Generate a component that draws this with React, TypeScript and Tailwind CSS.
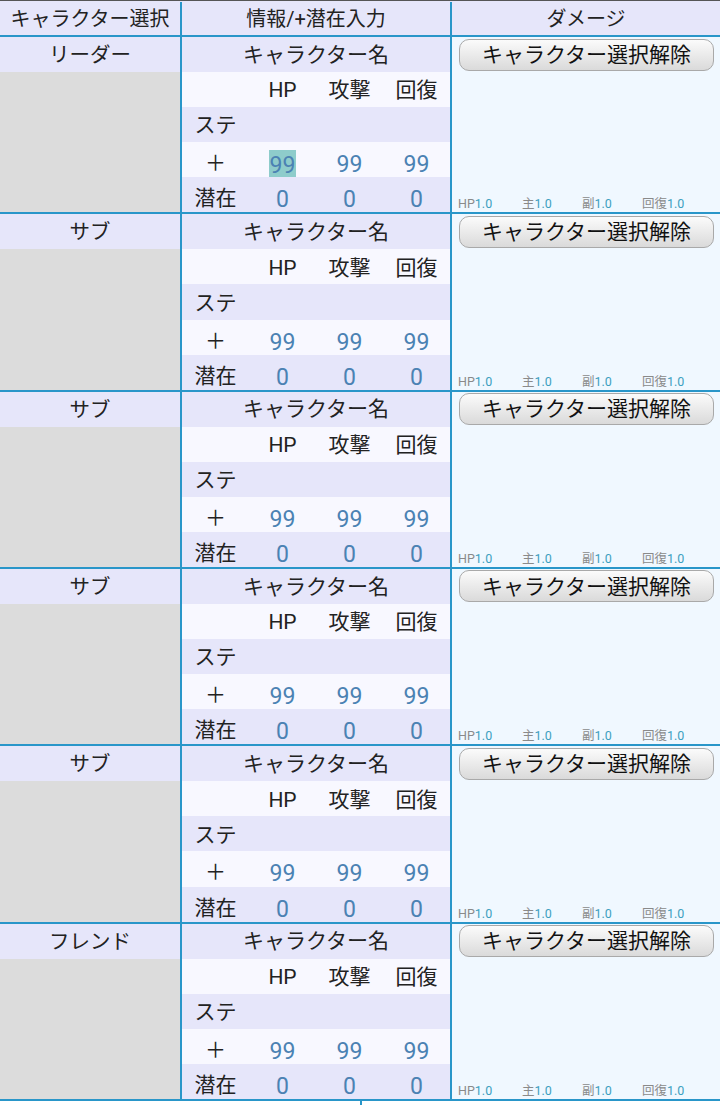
import React from "react";

const FONT = { fontFamily: 'Roboto, "Noto Sans CJK JP", "Noto Sans", sans-serif' };

const Row = ({ bg, children }: { bg: string; children: React.ReactNode }) => (
  <div className={`h-[35.07px] grid grid-cols-4 items-center ${bg}`}>{children}</div>
);

const Cell = ({ children, num }: { children?: React.ReactNode; num?: boolean }) => (
  <div
    className={`flex items-center justify-center ${
      num ? "pt-[6px] text-[23px] text-[#4b82b3]" : "pt-[3px] text-[21px] text-[#222]"
    }`}
  >
    {children}
  </div>
);

const Block = ({ name, highlight }: { name: string; highlight?: boolean }) => (
  <div className="flex border-b-2 border-[#2996c9]">
    <div className="w-[182px] border-r-2 border-[#2996c9] flex flex-col">
      <div className="h-[35.07px] pt-[2px] bg-[#e6e6fa] flex items-center justify-center text-[20.5px] text-[#222]">
        {name}
      </div>
      <div className="flex-1 bg-[#dcdcdc]" />
    </div>
    <div className="w-[270px] border-r-2 border-[#2996c9] flex flex-col">
      <div className="h-[35.07px] pt-[2px] bg-[#e6e6fa] flex items-center justify-center text-[21px] text-[#222]">
        キャラクター名
      </div>
      <Row bg="bg-[#f8f8ff]">
        <Cell />
        <Cell>
          <span className="text-[21px]">HP</span>
        </Cell>
        <Cell>攻撃</Cell>
        <Cell>回復</Cell>
      </Row>
      <Row bg="bg-[#e6e6fa]">
        <Cell>ステ</Cell>
        <Cell />
        <Cell />
        <Cell />
      </Row>
      <Row bg="bg-[#f8f8ff]">
        <Cell>＋</Cell>
        <Cell num>
          {highlight ? (
            <span className="bg-[#8ecccb] leading-[31px] px-[1px]">99</span>
          ) : (
            "99"
          )}
        </Cell>
        <Cell num>99</Cell>
        <Cell num>99</Cell>
      </Row>
      <Row bg="bg-[#e6e6fa]">
        <Cell>潜在</Cell>
        <Cell num>0</Cell>
        <Cell num>0</Cell>
        <Cell num>0</Cell>
      </Row>
    </div>
    <div className="flex-1 bg-[#f0f8ff] flex flex-col">
      <div className="mt-[1.5px] ml-[7px] mr-[6px] h-[32px] pt-[2px] rounded-[10px] border border-[#a9a9a9] bg-gradient-to-b from-[#fbfbfb] to-[#dadada] flex items-center justify-center text-[21px] text-[#111]">
        キャラクター選択解除
      </div>
      <div className="flex-1" />
      <div className="flex pl-[6px] text-[12.5px] leading-[16px]">
        <span className="w-[64px] text-[#8a8a8a]">
          HP<span className="text-[#3d9fc0]">1.0</span>
        </span>
        <span className="w-[60px] text-[#8a8a8a]">
          主<span className="text-[#3d9fc0]">1.0</span>
        </span>
        <span className="w-[60px] text-[#8a8a8a]">
          副<span className="text-[#3d9fc0]">1.0</span>
        </span>
        <span className="w-[60px] text-[#8a8a8a]">
          回復<span className="text-[#3d9fc0]">1.0</span>
        </span>
      </div>
    </div>
  </div>
);

export default function App() {
  const names = ["リーダー", "サブ", "サブ", "サブ", "サブ", "フレンド"];
  return (
    <div className="w-[720px] h-[1105px] overflow-hidden bg-white" style={FONT}>
      <div className="h-[1px] bg-[#555]" />
      <div className="flex h-[36px] pt-[1px] bg-[#e6e6fa] border-b-2 border-[#2996c9] text-[20px] text-[#222]">
        <div className="w-[182px] border-r-2 border-[#2996c9] flex items-center justify-center">
          キャラクター選択
        </div>
        <div className="w-[270px] border-r-2 border-[#2996c9] flex items-center justify-center">
          情報/+潜在入力
        </div>
        <div className="flex-1 flex items-center justify-center">ダメージ</div>
      </div>
      {names.map((n, i) => (
        <Block key={i} name={n} highlight={i === 0} />
      ))}
      <div className="flex h-[20px]">
        <div className="w-[362px] border-r-2 border-[#2996c9]" />
      </div>
    </div>
  );
}
